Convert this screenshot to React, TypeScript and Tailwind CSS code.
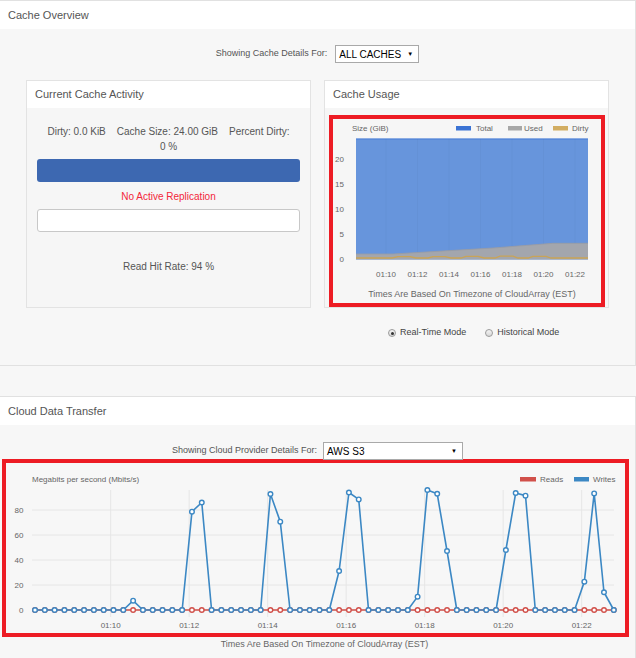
import React from "react";

// Write throughput samples, one every 15 seconds from 01:08 to 01:23.
const writes = [
  0, 0, 0, 0, 0, 0, 0, 0, 0, 0, 7.5, 0, 0, 0, 0, 0, 78.7, 86, 0, 0, 0, 0, 0, 0, 92.8, 70.7, 0, 0, 0, 0, 0,
  31.2, 94, 88.5, 0, 0, 0, 0, 0, 10.7, 96, 93, 47.2, 0, 0, 0, 0, 0, 48, 93.6, 91.5, 0, 0, 0, 0, 0, 22.7, 93.3,
  14.2, 0,
];

const px = (i: number) => 35 + 9.81 * i;
const py = (v: number) => 610 - 1.25 * v;

function FakeSelect({ value, width }: { value: string; width: string }) {
  return (
    <div
      className={`${width} flex h-[18px] items-center justify-between border border-[#a9a9a9] bg-white pl-[3px] pr-[5px] text-[10px] text-black`}
    >
      <span>{value}</span>
      <span className="text-[6px] leading-none">▼</span>
    </div>
  );
}

function Radio({ checked }: { checked?: boolean }) {
  return (
    <span className="flex h-[8px] w-[8px] items-center justify-center rounded-full border border-[#9c9c9c] bg-gradient-to-b from-[#f4f4f4] to-[#d8d8d8]">
      {checked && <span className="h-[3px] w-[3px] rounded-full bg-[#333]" />}
    </span>
  );
}

function CacheUsageChart() {
  const ticks = [
    { x: 386, t: "01:10" },
    { x: 417.5, t: "01:12" },
    { x: 449, t: "01:14" },
    { x: 480.5, t: "01:16" },
    { x: 512, t: "01:18" },
    { x: 543.5, t: "01:20" },
    { x: 575, t: "01:22" },
  ];
  const yLabels = [
    { v: "20", y: 159.3 },
    { v: "15", y: 184.3 },
    { v: "10", y: 209.3 },
    { v: "5", y: 234 },
    { v: "0", y: 258.7 },
  ];
  return (
    <svg width={268} height={184} viewBox="333 119 268 184" className="block">
      <text x={352} y={131} fontSize={8} fill="#666">
        Size (GiB)
      </text>
      <rect x={456} y={126} width={15} height={4.5} fill="#3b73d4" />
      <text x={476} y={131} fontSize={8} fill="#666">
        Total
      </text>
      <rect x={508} y={126} width={14} height={4.5} fill="#a7a7a7" />
      <text x={524} y={131} fontSize={8} fill="#666">
        Used
      </text>
      <rect x={553} y={126} width={15} height={4.5} fill="#d2ad62" />
      <text x={572} y={131} fontSize={8} fill="#666">
        Dirty
      </text>

      <rect x={356} y={138.7} width={232} height={120.8} fill="#6795dc" />
      <line x1={356} y1={139} x2={588} y2={139} stroke="#4a7fd6" strokeWidth={1} />
      {ticks.map((k) => (
        <line key={k.t} x1={k.x} y1={139} x2={k.x} y2={259} stroke="rgba(0,0,0,0.025)" />
      ))}
      <polygon
        points="356,254 393,254 493,248 553,243.3 588,243.3 588,259.5 356,259.5"
        fill="#a3a6ad"
      />
      <polyline
        points="356,254 393,254 493,248 553,243.3 588,243.3"
        fill="none"
        stroke="#9a9ca2"
        strokeWidth={0.8}
      />
      <path
        d="M356,258 L392,258 L398,256.6 L410,256.6 L416,258 L428,258 L433,256.6 L445,256.6 L451,258 L461,258 L466,256.3 L478,256.3 L484,258 L495,258 L500,256.2 L513,256.2 L518,258 L528,258 L533,256.3 L546,256.3 L551,258 L588,258"
        fill="none"
        stroke="#c9a457"
        strokeWidth={1.3}
      />
      {yLabels.map((l) => (
        <text key={l.v} x={344} y={l.y + 3} fontSize={8} fill="#666" textAnchor="end">
          {l.v}
        </text>
      ))}
      {ticks.map((k) => (
        <text key={k.t} x={k.x} y={277} fontSize={8} fill="#666" textAnchor="middle">
          {k.t}
        </text>
      ))}
      <text x={472} y={296.5} fontSize={9} fill="#666" textAnchor="middle">
        Times Are Based On Timezone of CloudArray (EST)
      </text>
    </svg>
  );
}

function TransferChart() {
  const ticks = ["01:10", "01:12", "01:14", "01:16", "01:18", "01:20", "01:22"].map((t, i) => ({
    t,
    x: 110.7 + 78.5 * i,
  }));
  const grid = [80, 60, 40, 20];
  const readPts = writes.map((_, i) => `${px(i)},${py(0)}`).join(" ");
  const writePts = writes.map((v, i) => `${px(i)},${py(v)}`).join(" ");
  return (
    <svg width={619} height={170} viewBox="6 463 619 170" className="block">
      <text x={32} y={482} fontSize={8} fill="#666">
        Megabits per second (Mbits/s)
      </text>
      <rect x={520} y={477} width={16} height={4.5} fill="#d1504a" />
      <text x={540} y={482} fontSize={8} fill="#666">
        Reads
      </text>
      <rect x={574} y={477} width={15} height={4.5} fill="#3c88c4" />
      <text x={593} y={482} fontSize={8} fill="#666">
        Writes
      </text>

      {grid.map((v) => (
        <line key={v} x1={32} y1={py(v)} x2={614} y2={py(v)} stroke="#e6e6e6" />
      ))}
      <line x1={32} y1={610} x2={614} y2={610} stroke="#e6e6e6" />
      {ticks.map((k) => (
        <line key={k.t} x1={k.x} y1={490} x2={k.x} y2={617} stroke="#e6e6e6" />
      ))}
      {[...grid, 0].map((v) => (
        <text key={v} x={23.5} y={py(v) + 3} fontSize={8} fill="#666" textAnchor="end">
          {v}
        </text>
      ))}
      {ticks.map((k) => (
        <text key={k.t} x={k.x} y={628} fontSize={8} fill="#666" textAnchor="middle">
          {k.t}
        </text>
      ))}

      <polyline points={readPts} fill="none" stroke="#d1504a" strokeWidth={1.6} />
      {writes.map((_, i) => (
        <circle key={`r${i}`} cx={px(i)} cy={py(0)} r={2.3} fill="#fff" stroke="#d1504a" strokeWidth={1.4} />
      ))}
      <polyline points={writePts} fill="none" stroke="#3c88c4" strokeWidth={1.6} strokeLinejoin="round" />
      {writes.map((v, i) => (
        <circle key={`w${i}`} cx={px(i)} cy={py(v)} r={2.3} fill="#fff" stroke="#3c88c4" strokeWidth={1.4} />
      ))}
    </svg>
  );
}

function Card({ title, children }: { title: string; children: React.ReactNode }) {
  return (
    <div className="flex h-[228px] w-[285px] flex-col border border-[#e3e3e3] bg-[#f6f6f6]">
      <div className="flex h-[27px] items-center bg-white pl-[8px] text-[11px] text-[#555]">{title}</div>
      <div className="min-h-0 flex-1">{children}</div>
    </div>
  );
}

export default function App() {
  return (
    <div className="h-[658px] w-[636px] overflow-hidden bg-[#f7f7f7] font-['Liberation_Sans',Arial,sans-serif] text-[#555]">
      {/* Cache overview panel */}
      <section className="flex h-[366px] flex-col border-t border-r border-b border-[#e1e1e1] bg-[#f7f7f7]">
        <div className="flex h-[28px] items-center bg-white pl-[8px] text-[11px]">Cache Overview</div>
        <div className="flex flex-1 flex-col pt-[16px]">
          <div className="flex items-center justify-center gap-[8px]">
            <span className="text-[9px]">Showing Cache Details For:</span>
            <FakeSelect value="ALL CACHES" width="w-[84px]" />
          </div>

          <div className="mt-[17px] flex gap-[13px] pl-[26px]">
            <Card title="Current Cache Activity">
              <div className="px-[10px] pt-[16px] text-center text-[10px] leading-[15px]">
                <div className="flex justify-center gap-[11px]">
                  <span>Dirty: 0.0 KiB</span>
                  <span>Cache Size: 24.00 GiB</span>
                  <span>Percent Dirty:</span>
                </div>
                <div>0 %</div>
                <div className="mt-[5px] h-[23px] rounded-[3px] bg-[#3d68b1]" />
                <div className="mt-[8px] leading-[14px] text-[#f3263a]">No Active Replication</div>
                <div className="mt-[5px] h-[23px] rounded-[3px] border border-[#c8c8c8] bg-white" />
                <div className="mt-[28px] leading-[14px]">Read Hit Rate: 94 %</div>
              </div>
            </Card>
            <Card title="Cache Usage">
              <div className="pl-[4px] pt-[7px]">
                <div className="h-[192px] w-[276px] border-4 border-[#ed1c24]">
                  <CacheUsageChart />
                </div>
              </div>
            </Card>
          </div>

          <div className="mt-[18px] flex h-[14px] items-center pl-[388px] text-[9px] text-[#444]">
            <Radio checked />
            <span className="ml-[4px]">Real-Time Mode</span>
            <span className="ml-[19px]">
              <Radio />
            </span>
            <span className="ml-[4px]">Historical Mode</span>
          </div>
        </div>
      </section>

      <div className="h-[30px]" />

      {/* Cloud data transfer panel */}
      <section className="h-[262px] border-t border-r border-[#e1e1e1] bg-[#f7f7f7]">
        <div className="flex h-[28px] items-center bg-white pl-[8px] text-[11px]">Cloud Data Transfer</div>
        <div className="pt-[17px]">
          <div className="flex items-center justify-center gap-[6px]">
            <span className="text-[9px]">Showing Cloud Provider Details For:</span>
            <FakeSelect value="AWS S3" width="w-[140px]" />
          </div>
          <div className="-mt-px ml-[2px] h-[178px] w-[627px] border-4 border-[#ed1c24]">
            <TransferChart />
          </div>
          <div className="mt-px pl-[14px] text-center text-[9px] leading-[12px] text-[#666]">
            Times Are Based On Timezone of CloudArray (EST)
          </div>
        </div>
      </section>
    </div>
  );
}
